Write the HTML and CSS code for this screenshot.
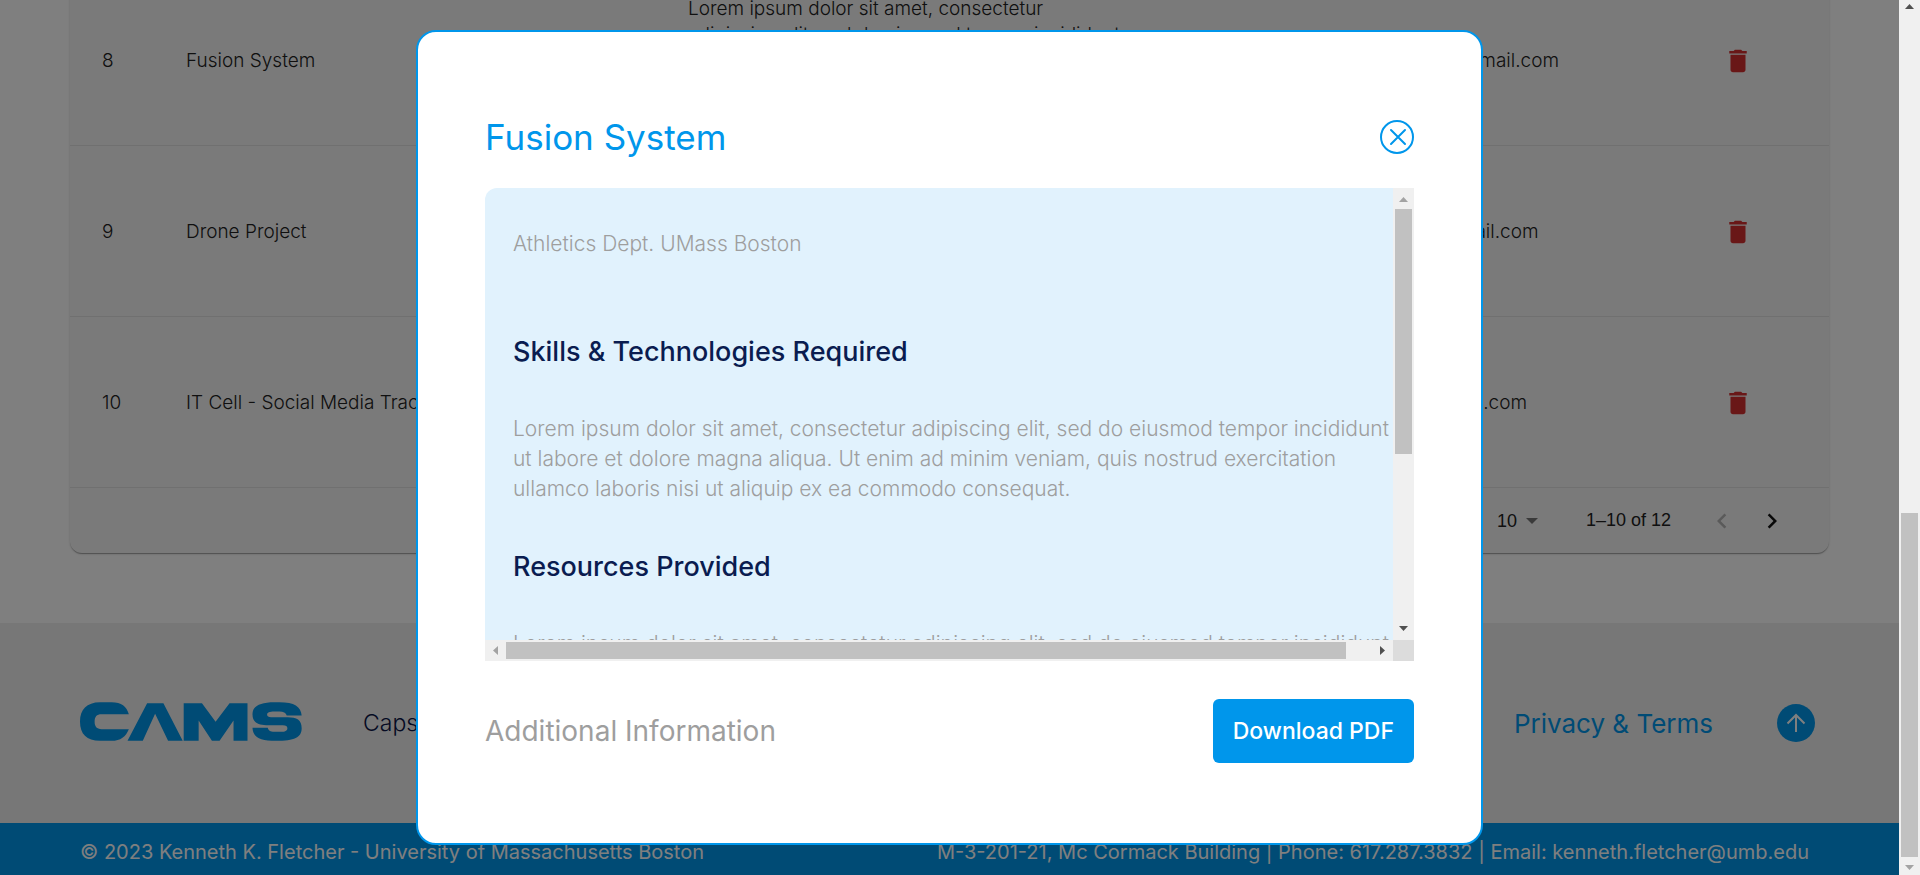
FILE: index.html
```html
<!DOCTYPE html>
<html lang="en">
<head>
<meta charset="utf-8">
<title>CAMS - Projects</title>
<link rel="stylesheet" href="styles.css">
</head>
<body>
<div class="window">
  <div class="page">
    <main class="projects">
      <div class="card">
        <table class="table">
          <colgroup><col class="col-id"><col class="col-name"><col class="col-text"><col><col class="col-action"></colgroup>
          <tbody>
            <tr>
              <td>8</td><td>Fusion System</td>
              <td>Lorem ipsum dolor sit amet, consectetur<br>adipiscing elit, sed do eiusmod tempor incididunt<br>ut labore et dolore magna aliqua. Ut enim ad<br>minim veniam, quis nostrud exercitation<br>ullamco laboris nisi ut aliquip.</td>
              <td>fusion.systems.u@gmail.com</td>
              <td><button class="icon-button" aria-label="Delete project 8"><svg class="icon trash" viewBox="0 0 24 24"><path d="M6 19c0 1.100.9 2 2 2h8c1.100 0 2-.9 2-2V7H6v12zM19 4h-3.500l-1-1h-5l-1 1H5v2h14V4z"/></svg></button></td>
            </tr>
            <tr>
              <td>9</td><td>Drone Project</td>
              <td>Lorem ipsum dolor sit amet, consectetur<br>adipiscing elit, sed do eiusmod tempor incididunt<br>ut labore et dolore magna aliqua. Ut enim ad<br>minim veniam, quis nostrud exercitation<br>ullamco laboris nisi ut aliquip.</td>
              <td>drone.projectu@gmail.com</td>
              <td><button class="icon-button" aria-label="Delete project 9"><svg class="icon trash" viewBox="0 0 24 24"><path d="M6 19c0 1.100.9 2 2 2h8c1.100 0 2-.9 2-2V7H6v12zM19 4h-3.500l-1-1h-5l-1 1H5v2h14V4z"/></svg></button></td>
            </tr>
            <tr>
              <td>10</td><td>IT Cell - Social Media Tracker</td>
              <td>Lorem ipsum dolor sit amet, consectetur<br>adipiscing elit, sed do eiusmod tempor incididunt<br>ut labore et dolore magna aliqua. Ut enim ad<br>minim veniam, quis nostrud exercitation<br>ullamco laboris nisi ut aliquip.</td>
              <td>social.tracker@gmail.com</td>
              <td><button class="icon-button" aria-label="Delete project 10"><svg class="icon trash" viewBox="0 0 24 24"><path d="M6 19c0 1.100.9 2 2 2h8c1.100 0 2-.9 2-2V7H6v12zM19 4h-3.500l-1-1h-5l-1 1H5v2h14V4z"/></svg></button></td>
            </tr>
          </tbody>
        </table>
        <div class="pagination">
          <label for="rows">Rows per page:</label>
          <span class="select-wrap"><select id="rows"><option>10</option></select><svg class="caret" viewBox="0 0 12 6"><path d="M0 0h12L6 6z"/></svg></span>
          <span class="range">1–10 of 12</span>
          <div class="pager">
            <button class="icon-button" aria-label="Previous page" disabled><svg class="icon" viewBox="0 0 24 24"><path d="M15.410 16.590 10.830 12l4.580-4.590L14 6l-6 6 6 6z"/></svg></button>
            <button class="icon-button" aria-label="Next page"><svg class="icon" viewBox="0 0 24 24"><path d="M8.590 16.590 13.170 12 8.590 7.410 10 6l6 6-6 6z"/></svg></button>
          </div>
        </div>
      </div>
    </main>
    <footer>
      <div class="footer-main">
        <svg class="logo" viewBox="60 62 668 116" role="img" aria-label="CAMS">
          <path d="M207 98C200 75 185 62 155 62H120C80 62 60 85 60 120C60 158 80 178 120 178H155C182 178 198 165 207 143H125C110 143 104 135 104 121C104 105 110 98 125 98Z"/>
          <path d="M203 178 262 65H311L369 178H325L286 97 249 178Z"/>
          <path d="M372 178V65H427L468 121 510 65H564V178H522V117L480 178H457L417 117V178Z"/>
          <path d="M727 102C725 75 705 62 660 62H645C600 62 579 75 579 98C579 122 595 131 620 131H670C680 131 684 134 684 140C684 148 676 151 665 151H645C632 151 627 147 625 139H579C580 166 600 178 650 178C705 178 727 168 727 140C727 115 712 107 685 107H635C627 107 623 105 623 99C623 93 630 90 645 90H660C672 90 680 94 682 102Z"/>
        </svg>
        <span class="footer-name">Capstone Management System</span>
        <a class="privacy" href="#privacy">Privacy &amp; Terms</a>
        <button class="to-top" aria-label="Back to top"><svg viewBox="0 0 38 38"><path d="M19 28V11M10.500 19.500 19 11l8.500 8.500"/></svg></button>
      </div>
      <div class="footer-bar">
        <span>© 2023 Kenneth K. Fletcher - University of Massachusetts Boston</span>
        <span>M-3-201-21, Mc Cormack Building | Phone: 617.287.3832 | Email: kenneth.fletcher@umb.edu</span>
      </div>
    </footer>
    <div class="overlay">
      <section class="modal" role="dialog" aria-labelledby="modal-title">
        <header class="modal-header">
          <h2 id="modal-title">Fusion System</h2>
          <button class="close" aria-label="Close"><svg viewBox="0 0 34 34"><circle cx="17" cy="17" r="16"/><path d="M11 10 25 24M25 10 11 24"/></svg></button>
        </header>
        <div class="panel">
          <div class="panel-content">
            <p class="client">Athletics Dept. UMass Boston</p>
            <h3>Skills &amp; Technologies Required</h3>
            <p>Lorem ipsum dolor sit amet, consectetur adipiscing elit, sed do eiusmod tempor incididunt<br>ut labore et dolore magna aliqua. Ut enim ad minim veniam, quis nostrud exercitation<br>ullamco laboris nisi ut aliquip ex ea commodo consequat.</p>
            <h3>Resources Provided</h3>
            <p>Lorem ipsum dolor sit amet, consectetur adipiscing elit, sed do eiusmod tempor incididunt</p>
          </div>
          <div class="scroll-y" aria-hidden="true">
            <svg class="arrow-y dim" viewBox="0 0 9 5"><path d="M0 5h9L4.500 0z"/></svg>
            <div class="track-y"><div class="thumb-y"></div></div>
            <svg class="arrow-y" viewBox="0 0 9 5"><path d="M0 0h9L4.500 5z"/></svg>
          </div>
          <div class="scroll-x" aria-hidden="true">
            <svg class="arrow-x dim" viewBox="0 0 5 9"><path d="M5 0v9L0 4.500z"/></svg>
            <div class="track-x"><div class="thumb-x"></div></div>
            <svg class="arrow-x" viewBox="0 0 5 9"><path d="M0 0v9l5-4.500z"/></svg>
          </div>
          <div class="corner"></div>
        </div>
        <div class="modal-footer">
          <span>Additional Information</span>
          <button class="download">Download PDF</button>
        </div>
      </section>
    </div>
  </div>
  <div class="scroll-y" aria-hidden="true">
    <svg class="arrow-y" viewBox="0 0 9 5"><path d="M0 5h9L4.500 0z"/></svg>
    <div class="track-y page-track"><div class="thumb-y"></div></div>
    <svg class="arrow-y dim" viewBox="0 0 9 5"><path d="M0 0h9L4.500 5z"/></svg>
  </div>
</div>
</body>
</html>
```

FILE: styles.css
```css
* { box-sizing: border-box; }

body {
  margin: 0;
  font-family: Inter, "Open Sans", sans-serif;
  font-weight: 400;
  color: #212121;
}

h2, h3, p { margin: 0; }
button { font: inherit; border: 0; padding: 0; background: none; cursor: pointer; }

.window { display: flex; height: 100vh; overflow: hidden; }

/* The list is scrolled to its end, so content is aligned to the bottom. */
.page {
  position: relative;
  flex: 1;
  min-width: 0;
  display: flex;
  flex-direction: column;
  justify-content: flex-end;
  overflow: hidden;
  background: #fff;
}

.projects { padding: 0 70px 70px; }

.card {
  background: #f5f5f5;
  border-radius: 0 0 12px 12px;
  box-shadow: 0 2px 1px -1px rgba(0, 0, 0, .2), 0 1px 1px rgba(0, 0, 0, .14), 0 1px 3px rgba(0, 0, 0, .12);
}

.table { width: 100%; table-layout: fixed; border-collapse: collapse; font-size: 19px; line-height: 26px; font-weight: 300; }
.table td { padding: 21px 20px 19px; border-bottom: 1px solid #e0e0e0; white-space: nowrap; }
.table td:first-child { padding-left: 32px; }
.table td:last-child { text-align: center; }
.col-id { width: 96px; }
.col-name { width: 502px; }
.col-text { width: 612px; }
.col-action { width: 182px; }

.icon-button { display: inline-flex; vertical-align: middle; color: #111; }
.icon-button:disabled { color: #b4b4b4; }
.icon { width: 30px; height: 30px; fill: currentColor; }
.trash { fill: #d32f2f; }

.pagination {
  display: flex;
  align-items: center;
  justify-content: flex-end;
  height: 65px;
  padding-right: 42px;
  font-family: "Liberation Sans", Arial, sans-serif;
  font-size: 18px;
}
.select-wrap { display: flex; align-items: center; gap: 8px; margin: 0 48px 0 20px; }
.select-wrap select { appearance: none; border: 0; padding: 0; background: none; font: inherit; color: inherit; }
.caret { width: 12px; height: 6px; fill: #757575; }
.pager { display: flex; gap: 20px; margin-left: 36px; }

.footer-main {
  display: flex;
  align-items: center;
  height: 200px;
  padding: 0 84px 0 80px;
  background: #efefef;
}
.logo { width: 222px; height: 39px; margin-bottom: 4px; fill: #0096eb; }
.footer-name { margin-left: 61px; font-size: 23px; font-weight: 300; color: #0a1446; }
.privacy { margin-left: auto; font-size: 26px; color: #0096eb; text-decoration: none; }
.to-top { display: flex; width: 38px; height: 38px; margin-left: 64px; border-radius: 50%; background: #0096eb; }
.to-top svg { fill: none; stroke: #fff; stroke-width: 2; }

.footer-bar {
  display: flex;
  align-items: center;
  justify-content: space-between;
  height: 52px;
  padding: 5px 90px 0 80px;
  background: #0096eb;
  color: #fff;
  font-size: 20px;
}

.overlay {
  position: absolute;
  inset: 0;
  display: flex;
  align-items: center;
  justify-content: center;
  background: rgba(0, 0, 0, .5);
}

.modal {
  width: 100%;
  max-width: 1067px;
  padding: 80px 67px;
  border: 2px solid #0096eb;
  border-radius: 20px;
  background: #fff;
}

.modal-header { display: flex; align-items: center; justify-content: space-between; height: 50px; margin-bottom: 26px; }
.modal-header h2 { font-size: 35px; font-weight: 400; color: #0096eb; }
.close { display: flex; width: 34px; height: 34px; }
.close svg { fill: none; stroke: #0096eb; stroke-width: 2; stroke-linecap: round; }

.panel {
  display: grid;
  grid-template: minmax(0, 1fr) 21px / minmax(0, 1fr) 21px;
  height: 54vh;
  border-top-left-radius: 12px;
  background: #e1f2fd;
  overflow: hidden;
}
.panel-content { padding: 41px 0 0 28px; overflow: hidden; white-space: nowrap; font-size: 21px; line-height: 30px; font-weight: 300; color: #9e9e9e; }
.panel-content h3 { margin: 45px 0 44px; font-size: 27px; line-height: 36px; font-weight: 500; color: #0a1c50; }
.panel-content .client { margin-bottom: 75px; }

.scroll-y, .scroll-x { display: flex; align-items: center; background: #f0f0f0; }
.scroll-y { flex-direction: column; width: 21px; padding: 4px 0 5px; }
.scroll-x { padding: 0 8px; }
.track-y { flex: 1; width: 17px; margin: 8px 0; }
.track-x { flex: 1; height: 17px; margin: 0 8px; }
.thumb-y, .thumb-x { height: 100%; background: #c1c1c1; }
.arrow-y { width: 9px; height: 5px; fill: #505050; }
.arrow-x { width: 5px; height: 9px; fill: #505050; }
.dim { fill: #a3a3a3; }
.panel .scroll-y { padding: 9px 0; }
.panel .track-y { margin-top: 7px; }
.panel .thumb-y { height: 60%; }
.panel .thumb-x { width: 97%; }
.page-track { display: flex; flex-direction: column; justify-content: flex-end; }
.page-track .thumb-y { height: 41%; }
.corner { background: #dcdcdc; }

.modal-footer { display: flex; align-items: center; justify-content: space-between; margin-top: 38px; font-size: 28px; color: #9e9e9e; }
.download { height: 64px; padding: 0 20px; border-radius: 6px; background: #0096eb; color: #fff; font-size: 23px; font-weight: 500; }
```
